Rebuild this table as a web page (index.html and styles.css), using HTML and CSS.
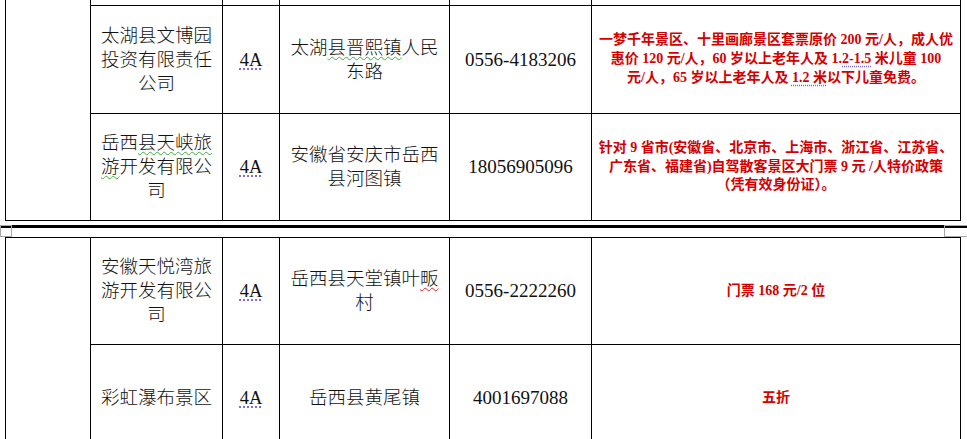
FILE: index.html
```html
<!DOCTYPE html>
<html lang="zh-CN">
<head>
<meta charset="utf-8">
<title>景区优惠表</title>
<link rel="stylesheet" href="styles.css">
</head>
<body>
<div class="page">
  <div class="grid t1">
    <div class="cell blank span3"></div>
    <div class="cell"></div>
    <div class="cell"></div>
    <div class="cell"></div>
    <div class="cell"></div>
    <div class="cell"></div>

    <div class="cell txt"><div class="in">太湖县文博园<br>投资有限责任<br>公司</div></div>
    <div class="cell txt"><div class="in"><span class="tag">4A</span></div></div>
    <div class="cell txt"><div class="in">太湖<span class="wavy">县晋熙镇</span>人民<br>东路</div></div>
    <div class="cell txt num"><div class="in">0556-4183206</div></div>
    <div class="cell red"><div class="in">一梦千年景区、十里画廊景区套票原价 200 元/人，成人优<br>惠价 120 元/人，60 岁以上老年人及 1.<span class="tag">2-1.5</span> 米儿童 100<br>元/人，65 岁以上老年人及 <span class="tag">1.2 米</span>以下儿童免费。</div></div>

    <div class="cell txt"><div class="in">岳西<span class="wavy">县天峡旅</span><br><span class="wavy">游</span>开发有限公<br>司</div></div>
    <div class="cell txt"><div class="in"><span class="tag">4A</span></div></div>
    <div class="cell txt"><div class="in">安徽省安庆市岳西<br>县河图镇</div></div>
    <div class="cell txt num"><div class="in">18056905096</div></div>
    <div class="cell red"><div class="in">针对 9 省市(安徽省、北京市、上海市、浙江省、江苏省、<br>广东省、福建省)自驾散客景区大门票 9 元 /人特价政策<br>（凭有效身份证）。</div></div>
  </div>

  <div class="sep">
    <div class="sep-line"></div>
    <span class="handle handle-left"></span>
    <span class="handle handle-right"></span>
  </div>

  <div class="grid t2">
    <div class="cell blank span2"></div>
    <div class="cell txt"><div class="in">安徽天悦湾旅<br>游开发有限公<br>司</div></div>
    <div class="cell txt"><div class="in"><span class="tag">4A</span></div></div>
    <div class="cell txt"><div class="in">岳西县天堂镇叶<span class="wavy-red">畈</span><br>村</div></div>
    <div class="cell txt num"><div class="in">0556-2222260</div></div>
    <div class="cell red"><div class="in">门票 168 元/2 位</div></div>

    <div class="cell txt"><div class="in">彩虹瀑布景区</div></div>
    <div class="cell txt"><div class="in"><span class="tag">4A</span></div></div>
    <div class="cell txt"><div class="in">岳西县黄尾镇</div></div>
    <div class="cell txt num"><div class="in">4001697088</div></div>
    <div class="cell red"><div class="in">五折</div></div>
  </div>
</div>
</body>
</html>
```
FILE: styles.css
```css
html, body {
  margin: 0;
  padding: 0;
  background: #fff;
}
body {
  width: 967px;
  height: 439px;
  overflow: hidden;
}
.page {
  width: 967px;
}
.grid {
  display: grid;
  grid-template-columns: 84px 131px 56px 169px 141px 368px;
  gap: 1px;
  background: #000;
  margin-left: 5px;
  width: 956px;
  box-sizing: border-box;
}
.t1 {
  padding: 0 1px 1px 1px;
  grid-template-rows: 5px 107px 106px;
}
.t2 {
  padding: 1px;
  grid-template-rows: 106px 106px;
}
.cell {
  background: #fff;
  display: flex;
  align-items: center;
  justify-content: center;
  text-align: center;
  overflow: hidden;
}
.in {
  text-align: center;
}
.span3 { grid-row: span 3; }
.span2 { grid-row: span 2; }
.txt {
  font-family: "Liberation Serif", "Noto Sans CJK SC", serif;
  font-size: 18.5px;
  line-height: 24px;
  font-weight: 300;
  color: #111;
  white-space: nowrap;
}
.num {
  font-size: 19px;
  font-weight: 400;
}
.tag {
  text-decoration: underline dotted #7a62d8;
  text-underline-offset: 3px;
}
.wavy {
  text-decoration: underline wavy #3fae3f;
  text-decoration-thickness: 1px;
  text-underline-offset: 2px;
}
.wavy-red {
  text-decoration: underline wavy #e02020;
  text-decoration-thickness: 1px;
  text-underline-offset: 2px;
}
.red {
  font-family: "Liberation Serif", "Noto Sans CJK SC", serif;
  font-size: 14px;
  line-height: 18.7px;
  font-weight: 700;
  color: #d40000;
  white-space: nowrap;
}
.sep {
  position: relative;
  height: 12px;
}
.sep-line {
  margin-top: 4px;
  height: 3px;
  background: #000;
}
.handle {
  position: absolute;
  top: 0;
  height: 12px;
  box-sizing: border-box;
  border: 1px solid #a8a8a8;
}
.handle-left {
  left: 0;
  width: 12px;
}
.handle-right {
  left: 944px;
  width: 30px;
}
```
